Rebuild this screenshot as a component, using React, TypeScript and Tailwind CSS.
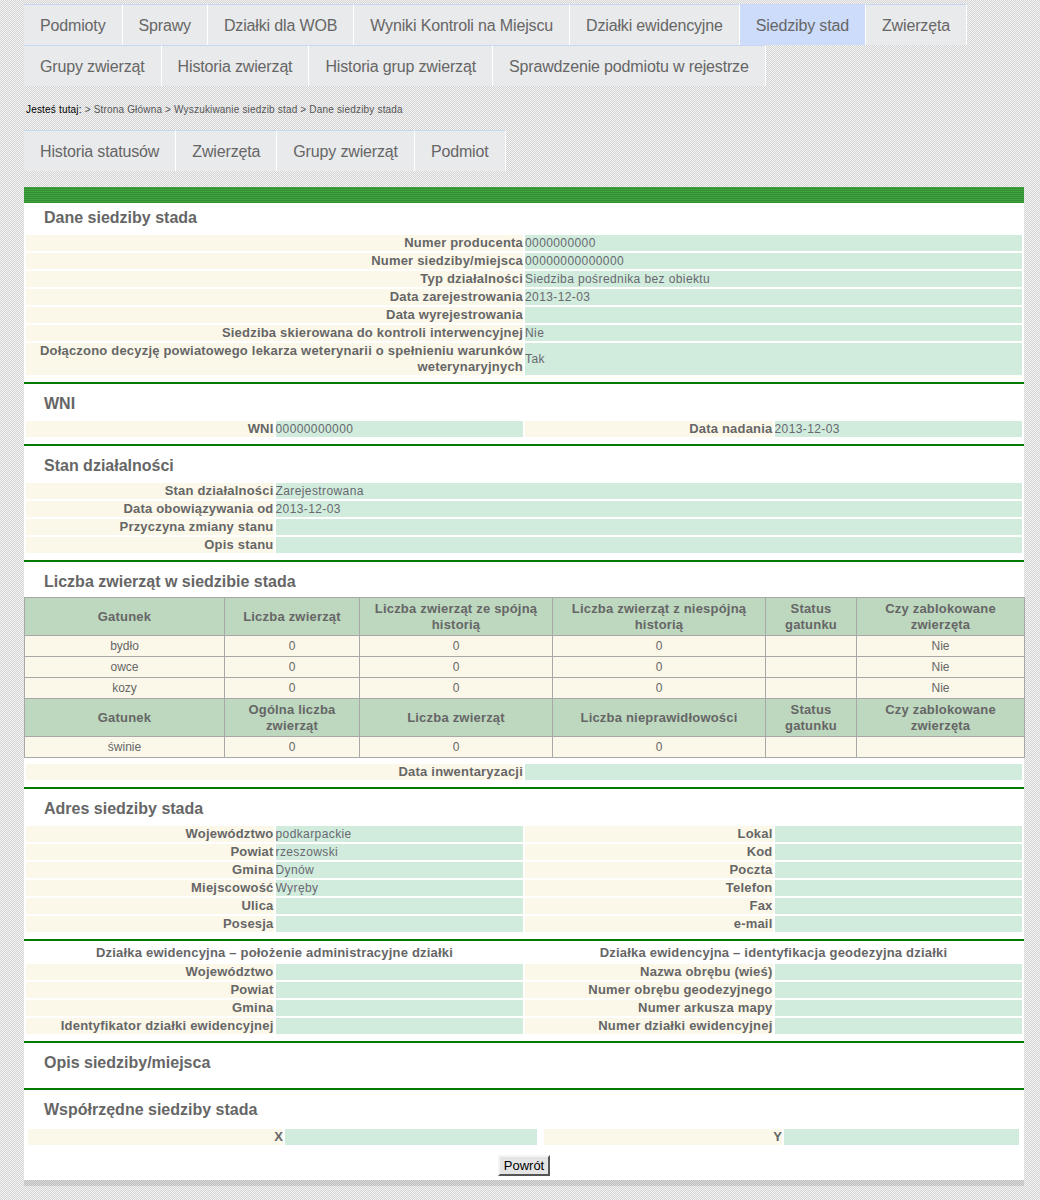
const mainTabs = [
  "Podmioty",
  "Sprawy",
  "Działki dla WOB",
  "Wyniki Kontroli na Miejscu",
  "Działki ewidencyjne",
  "Siedziby stad",
  "Zwierzęta",
  "Grupy zwierząt",
  "Historia zwierząt",
  "Historia grup zwierząt",
  "Sprawdzenie podmiotu w rejestrze",
];
const subTabs = ["Historia statusów", "Zwierzęta", "Grupy zwierząt", "Podmiot"];

const L = "bg-[#fbf8ea] text-right font-bold text-[13px] tracking-[0.2px] leading-[16px] text-[#666]";
const V = "bg-[#d1ecdc] text-[12px] tracking-[0.4px] leading-[16px] text-[#686870] flex items-center";

function Tab({ label, active }: { label: string; active?: boolean }) {
  return (
    <div
      className={`h-[41px] px-4 pt-[1px] flex items-center border-t border-t-[#c7d7f4] border-r border-r-white text-[16px] tracking-[-0.15px] text-[#666] ${
        active ? "bg-[#cddcfa]" : "bg-[#e9eaeb]"
      }`}>
      {label}
    </div>
  );
}

function Section({ title, first, children }: { title?: string; first?: boolean; children?: React.ReactNode }) {
  return (
    <div className={first ? "" : "mt-[5px] border-t-2 border-t-[#007a00]"}>
      {title && (
        <h2 className={`${first ? "pt-[5px]" : "pt-[10px]"} pb-[5px] pl-5 text-[16px] leading-[20px] font-bold text-[#666]`}>
          {title}
        </h2>
      )}
      {children}
    </div>
  );
}

// label | value, each taking half the width
function Row2({ label, value }: { label: string; value?: string }) {
  return (
    <>
      <div className={`${L} col-span-2`}>{label}</div>
      <div className={`${V} col-span-2`}>{value}</div>
    </>
  );
}

function Row4({ l1, v1, l2, v2 }: { l1: string; v1?: string; l2: string; v2?: string }) {
  return (
    <>
      <div className={L}>{l1}</div>
      <div className={V}>{v1}</div>
      <div className={L}>{l2}</div>
      <div className={V}>{v2}</div>
    </>
  );
}

const th = "bg-[#bdd8bf] border border-[#a8a8a8] font-bold text-[13px] tracking-[0.2px] leading-[16px] pt-[3px] pb-[2px] text-[#666] text-center";
const td = "bg-[#fbf8ea] border border-[#a8a8a8] h-[21px] text-[12px] text-[#666] text-center p-0";

export default function App() {
  return (
    <div className="min-h-[1200px] bg-[repeating-conic-gradient(#d3d3d3_0_25%,#f4f4f4_0_50%)] bg-[length:2px_2px] font-['Liberation_Sans',Arial,sans-serif] pt-[4px]">
      <div className="ml-[24px] w-[1000px]">
        <div className="flex flex-wrap">
          {mainTabs.map((t) => (
            <Tab key={t} label={t} active={t === "Siedziby stad"} />
          ))}
        </div>

        <div className="pt-[18px] pb-[14px] pl-[2px] text-[10px] tracking-[0.18px] leading-[12px] text-[#555]">
          <span className="text-black">Jesteś tutaj:</span> &gt; Strona Główna &gt; Wyszukiwanie siedzib stad &gt; Dane siedziby stada
        </div>

        <div className="flex">
          {subTabs.map((t) => (
            <Tab key={t} label={t} />
          ))}
        </div>

        <div className="mt-[16px] h-[16px] bg-[repeating-linear-gradient(to_bottom,#43a343_0_1px,#2f8f2f_1px_2px)]" />

        <div className="bg-white">
          <Section title="Dane siedziby stada" first>
            <div className="grid grid-cols-4 gap-[2px] p-[2px]">
              <Row2 label="Numer producenta" value="0000000000" />
              <Row2 label="Numer siedziby/miejsca" value="00000000000000" />
              <Row2 label="Typ działalności" value="Siedziba pośrednika bez obiektu" />
              <Row2 label="Data zarejestrowania" value="2013-12-03" />
              <Row2 label="Data wyrejestrowania" />
              <Row2 label="Siedziba skierowana do kontroli interwencyjnej" value="Nie" />
              <Row2 label="Dołączono decyzję powiatowego lekarza weterynarii o spełnieniu warunków weterynaryjnych" value="Tak" />
            </div>
          </Section>

          <Section title="WNI">
            <div className="grid grid-cols-4 gap-[2px] p-[2px]">
              <Row4 l1="WNI" v1="00000000000" l2="Data nadania" v2="2013-12-03" />
            </div>
          </Section>

          <Section title="Stan działalności">
            <div className="grid grid-cols-4 gap-[2px] p-[2px]">
              {[
                ["Stan działalności", "Zarejestrowana"],
                ["Data obowiązywania od", "2013-12-03"],
                ["Przyczyna zmiany stanu", ""],
                ["Opis stanu", ""],
              ].map(([l, v]) => (
                <div key={l} className="contents">
                  <div className={L}>{l}</div>
                  <div className={`${V} col-span-3`}>{v}</div>
                </div>
              ))}
            </div>
          </Section>

          <Section title="Liczba zwierząt w siedzibie stada">
            <table className="w-[1000px] table-fixed border-collapse border border-[#a8a8a8]">
              <colgroup>
                <col className="w-[200px]" />
                <col className="w-[135px]" />
                <col className="w-[193px]" />
                <col className="w-[213px]" />
                <col className="w-[91px]" />
                <col className="w-[168px]" />
              </colgroup>
              <tbody>
                <tr>
                  <th className={th}>Gatunek</th>
                  <th className={th}>Liczba zwierząt</th>
                  <th className={th}>Liczba zwierząt ze spójną historią</th>
                  <th className={th}>Liczba zwierząt z niespójną historią</th>
                  <th className={th}>Status gatunku</th>
                  <th className={th}>Czy zablokowane zwierzęta</th>
                </tr>
                {["bydło", "owce", "kozy"].map((g) => (
                  <tr key={g}>
                    <td className={td}>{g}</td>
                    <td className={td}>0</td>
                    <td className={td}>0</td>
                    <td className={td}>0</td>
                    <td className={td}></td>
                    <td className={td}>Nie</td>
                  </tr>
                ))}
                <tr>
                  <th className={th}>Gatunek</th>
                  <th className={th}>Ogólna liczba zwierząt</th>
                  <th className={th}>Liczba zwierząt</th>
                  <th className={th}>Liczba nieprawidłowości</th>
                  <th className={th}>Status gatunku</th>
                  <th className={th}>Czy zablokowane zwierzęta</th>
                </tr>
                <tr>
                  <td className={td}>świnie</td>
                  <td className={td}>0</td>
                  <td className={td}>0</td>
                  <td className={td}>0</td>
                  <td className={td}></td>
                  <td className={td}></td>
                </tr>
              </tbody>
            </table>
            <div className="mt-[4px] grid grid-cols-4 gap-[2px] p-[2px]">
              <Row2 label="Data inwentaryzacji" />
            </div>
          </Section>

          <Section title="Adres siedziby stada">
            <div className="grid grid-cols-4 gap-[2px] p-[2px]">
              <Row4 l1="Województwo" v1="podkarpackie" l2="Lokal" />
              <Row4 l1="Powiat" v1="rzeszowski" l2="Kod" />
              <Row4 l1="Gmina" v1="Dynów" l2="Poczta" />
              <Row4 l1="Miejscowość" v1="Wyręby" l2="Telefon" />
              <Row4 l1="Ulica" l2="Fax" />
              <Row4 l1="Posesja" l2="e-mail" />
            </div>
          </Section>

          <Section>
            <div className="grid grid-cols-4 gap-[2px] p-[2px]">
              <div className="col-span-2 pt-[1px] text-center font-bold text-[13px] tracking-[0.2px] leading-[18px] text-[#666]">
                Działka ewidencyjna – położenie administracyjne działki
              </div>
              <div className="col-span-2 pt-[1px] text-center font-bold text-[13px] tracking-[0.2px] leading-[18px] text-[#666]">
                Działka ewidencyjna – identyfikacja geodezyjna działki
              </div>
              <Row4 l1="Województwo" l2="Nazwa obrębu (wieś)" />
              <Row4 l1="Powiat" l2="Numer obrębu geodezyjnego" />
              <Row4 l1="Gmina" l2="Numer arkusza mapy" />
              <Row4 l1="Identyfikator działki ewidencyjnej" l2="Numer działki ewidencyjnej" />
            </div>
          </Section>

          <Section title="Opis siedziby/miejsca">
            <div className="h-[5px]" />
          </Section>

          <Section title="Współrzędne siedziby stada">
            <div className="flex gap-[7px] pl-[4px] pt-[4px]">
              <div className="flex gap-[2px]">
                <div className={`${L} w-[255px]`}>X</div>
                <div className={`${V} w-[252px]`}></div>
              </div>
              <div className="flex gap-[2px]">
                <div className={`${L} w-[238px]`}>Y</div>
                <div className={`${V} w-[235px]`}></div>
              </div>
            </div>
            <div className="flex justify-center pt-[10px] pb-[4px]">
              <button className="h-[21px] px-[4px] bg-[#e4e4e4] border-2 border-t-[#f4f4f4] border-l-[#f4f4f4] border-r-[#555] border-b-[#555] text-[13px] leading-[15px] text-black">
                Powrót
              </button>
            </div>
          </Section>
        </div>
        <div className="h-[6px] bg-[repeating-conic-gradient(#bdbdbd_0_25%,#dadada_0_50%)] bg-[length:2px_2px]" />
      </div>
    </div>
  );
}
